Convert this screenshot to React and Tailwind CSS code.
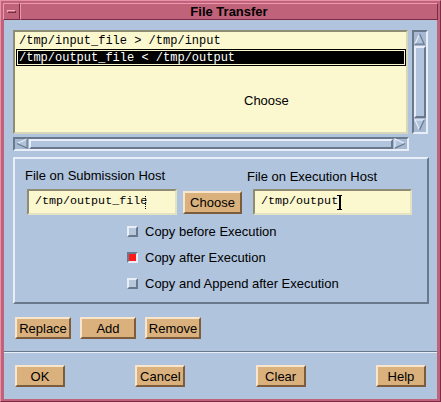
import React from 'react'

const sans = { fontFamily: '"Liberation Sans", Arial, sans-serif' }
const mono = { fontFamily: '"Liberation Mono", "Courier New", monospace' }

const raised = 'border-2 border-t-[#e8eef8] border-l-[#e8eef8] border-b-[#6a788c] border-r-[#6a788c]'
const sunken = 'border-2 border-t-[#6a788c] border-l-[#6a788c] border-b-[#e8eef8] border-r-[#e8eef8]'
const field = 'border-2 border-t-[#8e8c72] border-l-[#8e8c72] border-b-[#e4e2c4] border-r-[#e4e2c4] bg-[#fbf8d0]'
const btn = 'border-2 border-t-[#f8e6cc] border-l-[#f8e6cc] border-b-[#7c5c3a] border-r-[#7c5c3a] bg-[#dab07c] flex items-center justify-center text-[13px] text-black leading-none'

function Arrow({ dir }) {
  // triangle drawn with light/dark edges, motif style
  const pts = {
    up: { p: '6,1 11,12 1,12', light: 'M1,12 L6,1', dark: 'M6,1 L11,12 L1,12' },
    down: { p: '1,1 11,1 6,12', light: 'M6,12 L1,1 L11,1', dark: 'M11,1 L6,12' },
    left: { p: '1,6 12,1 12,11', light: 'M12,1 L1,6', dark: 'M1,6 L12,11 L12,1' },
    right: { p: '1,1 12,6 1,11', light: 'M1,11 L1,1 L12,6', dark: 'M12,6 L1,11' },
  }[dir]
  return (
    <svg width="12" height="12" viewBox="0 0 13 13" className="shrink-0">
      <polygon points={pts.p} fill="#b0c4de" />
      <path d={pts.light} stroke="#e8eef8" strokeWidth="1.3" fill="none" />
      <path d={pts.dark} stroke="#6a788c" strokeWidth="1.3" fill="none" />
    </svg>
  )
}

function Check({ on, label }) {
  return (
    <div className="h-[26px] flex items-center">
      <div
        className={
          on
            ? 'w-[11px] h-[11px] border-2 border-t-[#6a788c] border-l-[#6a788c] border-b-[#e8eef8] border-r-[#e8eef8] bg-[#ff1a1a]'
            : 'w-[11px] h-[11px] border-2 border-t-[#e8eef8] border-l-[#e8eef8] border-b-[#6a788c] border-r-[#6a788c] bg-[#b8c8dc]'
        }
      />
      <span className="ml-[7px] text-[13px] text-black leading-none">{label}</span>
    </div>
  )
}

export default function App() {
  return (
    <div className="w-[441px] h-[402px] bg-[#c0627a] border border-t-[#e890a8] border-l-[#e890a8] border-b-[#7a2c44] border-r-[#7a2c44] px-[2px] pt-[1px] pb-[2px] flex flex-col" style={sans}>
      {/* Title bar */}
      <div className="h-[17px] flex mt-[1px]">
        <div className="w-[17px] h-[17px] border border-t-[#ec98ae] border-l-[#ec98ae] border-b-[#7a2c44] border-r-[#7a2c44] flex items-center justify-center">
          <div className="w-[9px] h-[3px] border border-t-[#f4b0c2] border-l-[#f4b0c2] border-b-[#7a2c44] border-r-[#7a2c44]" />
        </div>
        <div className="flex-1 border border-t-[#ec98ae] border-l-[#ec98ae] border-b-[#7a2c44] border-r-[#7a2c44] flex items-center justify-center">
          <span className="text-[13px] font-bold text-black leading-none">File Transfer</span>
        </div>
      </div>

      {/* Client area */}
      <div className="flex-1 bg-[#b0c4de] ml-[1px] mr-[1px] pt-[10px] px-[9px] flex flex-col">
        <div className="flex h-[104px]">
          <div className="relative w-[396px] h-full border-2 border-t-[#8e8c72] border-l-[#8e8c72] border-b-[#d8d6b8] border-r-[#d8d6b8] bg-[#fbf8d0] pt-[1px]" style={mono}>
            <div className="h-[16px] pl-[4px] flex items-center text-[12px] text-black whitespace-pre">/tmp/input_file &gt; /tmp/input</div>
            <div className="h-[17px] ml-[1px] bg-black p-[1px]">
              <div className="h-full border border-[#fbf8d0] pl-[1px] flex items-center text-[12px] text-white whitespace-pre">/tmp/output_file &lt; /tmp/output</div>
            </div>
            <span className="absolute left-[229px] top-[62px] text-[13px] text-black leading-none" style={sans}>Choose</span>
          </div>
          <div className={`ml-[4px] w-[16px] h-full bg-[#a6b8d2] ${sunken} border flex flex-col items-center`}>
            <div className="h-[14px] flex items-center justify-center"><Arrow dir="up" /></div>
            <div className={`flex-1 w-full ${raised} border bg-[#b0c4de]`} />
            <div className="h-[14px] flex items-center justify-center"><Arrow dir="down" /></div>
          </div>
        </div>

        <div className={`mt-[3px] w-[396px] h-[14px] bg-[#a6b8d2] ${sunken} border flex items-center`}>
          <div className="w-[14px] flex items-center justify-center"><Arrow dir="left" /></div>
          <div className={`flex-1 h-full ${raised} border bg-[#b0c4de]`} />
          <div className="w-[14px] flex items-center justify-center"><Arrow dir="right" /></div>
        </div>

        {/* Frame */}
        <div className={`mt-[6px] w-[416px] h-[147px] ${raised} pt-[9px] pl-[10px]`}>
          <div className="flex items-end">
            <div className="flex flex-col w-[152px]">
              <span className="text-[13px] leading-[15px] text-black">File on Submission Host</span>
              <div className={`mt-[6px] ml-[2px] w-[150px] h-[26px] ${field} pl-[6px] flex items-center text-[11.7px] text-black`} style={mono}>
                <span className="whitespace-pre">/tmp/output_file</span>
                <span className="w-[1px] h-[13px] border-l border-dotted border-black -ml-[2px]" />
              </div>
            </div>
            <div className={`ml-[6px] mb-[1px] w-[59px] h-[23px] ${btn}`}>Choose</div>
            <div className="flex flex-col ml-[5px]">
              <span className="text-[13px] leading-[15px] text-black">File on Execution Host</span>
              <div className={`mt-[5px] ml-[6px] w-[159px] h-[26px] ${field} pl-[6px] flex items-center text-[11.7px] text-black`} style={mono}>
                <span className="whitespace-pre">/tmp/output</span>
                <span className="relative -ml-[1px] w-[5px] h-[15px] flex flex-col items-center">
                  <span className="w-[5px] h-[1px] bg-black" />
                  <span className="w-[2px] flex-1 bg-black" />
                  <span className="w-[5px] h-[1px] bg-black" />
                </span>
              </div>
            </div>
          </div>
          <div className="mt-[3px] pl-[102px] flex flex-col">
            <Check label="Copy before Execution" />
            <Check on label="Copy after Execution" />
            <Check label="Copy and Append after Execution" />
          </div>
        </div>

        {/* Action buttons */}
        <div className="mt-[13px] ml-[2px] flex gap-[9px]">
          <div className={`w-[56px] h-[22px] ${btn}`}>Replace</div>
          <div className={`w-[56px] h-[22px] ${btn}`}>Add</div>
          <div className={`w-[56px] h-[22px] ${btn}`}>Remove</div>
        </div>

        <div className="mt-[12px] -mx-[9px] border-t border-t-[#6a788c] border-b border-b-[#e8eef8]" />

        <div className="mt-[12px] px-[2px] flex justify-between">
          <div className={`w-[50px] h-[22px] ${btn}`}>OK</div>
          <div className={`w-[50px] h-[22px] ${btn}`}>Cancel</div>
          <div className={`w-[50px] h-[22px] ${btn}`}>Clear</div>
          <div className={`w-[50px] h-[22px] ${btn}`}>Help</div>
        </div>
      </div>
    </div>
  )
}
